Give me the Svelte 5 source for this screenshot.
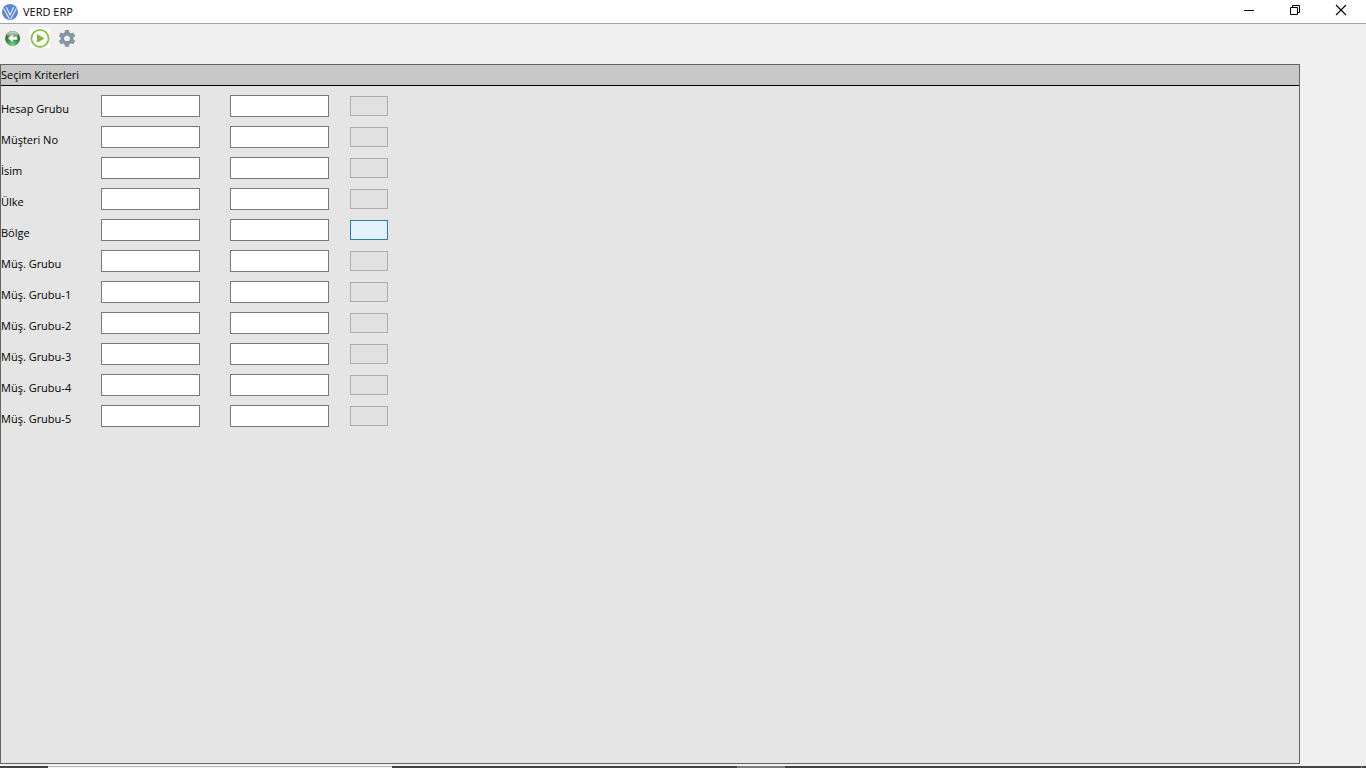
<script>
  const labels = [
    'Hesap Grubu',
    'Müşteri No',
    'İsim',
    'Ülke',
    'Bölge',
    'Müş. Grubu',
    'Müş. Grubu-1',
    'Müş. Grubu-2',
    'Müş. Grubu-3',
    'Müş. Grubu-4',
    'Müş. Grubu-5'
  ];

  let criteria = $state(labels.map((label) => ({ label, from: '', to: '' })));
  let active = $state(4);

  function clearAll() {
    for (const row of criteria) {
      row.from = '';
      row.to = '';
    }
  }
</script>

<div class="window">
  <header class="titlebar">
    <svg class="logo" width="16" height="16" viewBox="0 0 16 16">
      <circle cx="8" cy="8" r="8" fill="#5c88d2" />
      <path d="M1.6 4.4 7.4 15M4.4 3.2 8 11l3.6-7.8M14.4 4.4 8.6 15" fill="none" stroke="#e4eefb" stroke-width="1.1" />
    </svg>
    <h1>VERD ERP</h1>
    <div class="controls">
      <button aria-label="Küçült">
        <svg width="12" height="12" viewBox="0 0 12 12"><path d="M1 6.5h10" stroke="#000" /></svg>
      </button>
      <button aria-label="Önceki Boyut">
        <svg width="12" height="12" viewBox="0 0 12 12" fill="none" stroke="#000">
          <path d="M1.5 3.5h7v7h-7zM3.5 3.5v-2h7v7h-2" />
        </svg>
      </button>
      <button aria-label="Kapat">
        <svg width="12" height="12" viewBox="0 0 12 12"><path d="M1 1l10 10M11 1 1 11" stroke="#000" stroke-width="1.1" /></svg>
      </button>
    </div>
  </header>

  <nav class="toolbar">
    <button aria-label="Geri" onclick={clearAll}>
      <svg width="20" height="20" viewBox="0 0 20 20">
        <defs>
          <radialGradient id="ball" cx="0.5" cy="0.9" r="0.9">
            <stop offset="0" stop-color="#7cd07f" />
            <stop offset="0.45" stop-color="#3c8a48" />
            <stop offset="1" stop-color="#2c5a38" />
          </radialGradient>
          <linearGradient id="shine" x1="0" y1="0" x2="0" y2="1">
            <stop offset="0" stop-color="#fff" stop-opacity="0.8" />
            <stop offset="1" stop-color="#fff" stop-opacity="0.1" />
          </linearGradient>
        </defs>
        <circle cx="9.6" cy="10.4" r="7.5" fill="url(#ball)" />
        <ellipse cx="9.6" cy="6.6" rx="5.8" ry="3.4" fill="url(#shine)" />
        <path d="M5 10.2 9.8 6.2v2.5h4.4v3H9.8v2.5z" fill="#f4fff2" />
      </svg>
    </button>
    <button class="run" aria-label="Çalıştır">
      <svg width="20" height="20" viewBox="0 0 20 20">
        <circle cx="10" cy="10.4" r="8.6" fill="#fff" stroke="#8bbf4d" stroke-width="1.8" />
        <path d="M7 6v8.8l7.6-4.4z" fill="#80b83e" />
      </svg>
    </button>
    <button aria-label="Ayarlar">
      <svg width="20" height="20" viewBox="0 0 20 20">
        <g fill="#8496a3">
          {#each [0, 60, 120, 180, 240, 300] as angle}
            <path d="M7.4 5.9 8 2.1h4l.6 3.8z" transform="rotate({angle} 10 10.4)" />
          {/each}
        </g>
        <circle cx="10" cy="10.4" r="4.5" fill="none" stroke="#8496a3" stroke-width="3.6" />
        <circle cx="10" cy="10.4" r="2.7" fill="#f0f0f0" />
      </svg>
    </button>
  </nav>

  <main class="panel">
    <h2>Seçim Kriterleri</h2>
    <form>
      {#each criteria as row, i}
        <div class="row">
          <label for="from-{i}">{row.label}</label>
          <input id="from-{i}" type="text" bind:value={row.from} />
          <input type="text" aria-label="{row.label} bitiş" bind:value={row.to} />
          <button
            type="button"
            class:active={active === i}
            aria-label="{row.label} seç"
            onclick={() => (active = i)}
          ></button>
        </div>
      {/each}
    </form>
  </main>

  <footer class="taskbar">
    <span class="start"></span>
    <span class="search"></span>
    <span class="apps"></span>
    <span class="current"></span>
    <span class="tray"></span>
  </footer>
</div>

<style>
  :global(body) {
    margin: 0;
  }
  .window {
    display: flex;
    flex-direction: column;
    min-height: 100vh;
    background: #f0f0f0;
    color: #000;
    font-family: 'Open Sans', 'Noto Sans', sans-serif;
    font-size: 11px;
    line-height: 16px;
  }
  button {
    padding: 0;
    border: none;
    background: none;
    font: inherit;
  }
  svg {
    display: block;
  }
  h1,
  h2 {
    margin: 0;
    font-size: 11px;
    font-weight: 400;
  }
  .titlebar {
    display: flex;
    align-items: center;
    height: 23px;
    padding-left: 2px;
    background: #fff;
    border-bottom: 1px solid #a5a5a5;
  }
  .logo {
    margin-right: 5px;
  }
  .controls {
    display: flex;
    align-self: stretch;
    margin-left: auto;
    padding-right: 2px;
  }
  .controls button {
    display: flex;
    justify-content: center;
    width: 46px;
    padding-top: 4px;
  }
  .toolbar {
    display: flex;
    gap: 7px;
    height: 36px;
    padding: 4px 3px 0;
  }
  .toolbar button {
    height: 20px;
  }
  .run {
    background: #fff;
  }
  .panel {
    flex: 1;
    margin-right: 66px;
    background: #e5e5e5;
    border: 1px solid #646464;
  }
  .panel h2 {
    height: 20px;
    line-height: 20px;
    background: #c8c8c8;
    border-bottom: 1px solid #000;
  }
  form {
    display: flex;
    flex-direction: column;
    gap: 9px;
    padding-top: 9px;
  }
  .row {
    display: grid;
    grid-template-columns: 100px 129px 120px 38px;
    align-items: center;
    height: 22px;
  }
  label {
    padding-top: 6px;
  }
  input {
    box-sizing: border-box;
    width: 99px;
    height: 22px;
    padding: 0 4px;
    border: 1px solid #7a7a7a;
    background: #fff;
    font: inherit;
  }
  .row button {
    height: 20px;
    border: 1px solid #adadad;
    background: #e1e1e1;
  }
  .row .active {
    border-color: #2e7ba6;
    background: #e2f1fb;
  }
  .taskbar {
    display: flex;
    height: 2px;
    margin-top: 2px;
    background: #454545;
  }
  .start {
    width: 48px;
  }
  .search {
    width: 344px;
    border-top: 1px solid #bcbcbc;
    background: #f0f0f0;
  }
  .apps {
    width: 345px;
  }
  .current {
    width: 48px;
    background: #7c7c7c;
  }
  .tray {
    flex: 1;
    margin-right: 4px;
    border-right: 1px solid #8c8c8c;
  }
</style>
